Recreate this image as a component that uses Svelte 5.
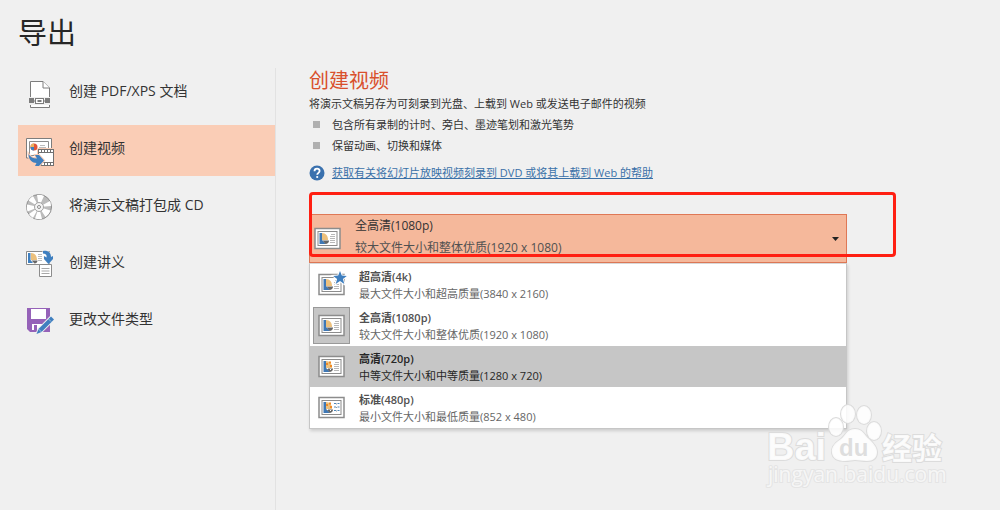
<script>
	const menu = [
		{ id: 'pdf', label: '创建 PDF/XPS 文档' },
		{ id: 'video', label: '创建视频' },
		{ id: 'cd', label: '将演示文稿打包成 CD' },
		{ id: 'handout', label: '创建讲义' },
		{ id: 'type', label: '更改文件类型' }
	];

	const qualities = [
		{ id: '4k', name: '超高清(4k)', info: '最大文件大小和超高质量(3840 x 2160)' },
		{ id: '1080', name: '全高清(1080p)', info: '较大文件大小和整体优质(1920 x 1080)' },
		{ id: '720', name: '高清(720p)', info: '中等文件大小和中等质量(1280 x 720)' },
		{ id: '480', name: '标准(480p)', info: '最小文件大小和最低质量(852 x 480)' }
	];

	let page = $state('video');
	let selected = $state('1080');
	let hovered = $state('720');
	let open = $state(true);

	let current = $derived(qualities.find((q) => q.id === selected));

	function choose(id) {
		selected = id;
		open = false;
	}
</script>

{#snippet slide(kind)}
	<svg class="slide" width="32" height="28" viewBox="0 0 32 28" aria-hidden="true">
		<rect x="1" y="3.5" width="25" height="20" fill="#fff" stroke="#8c8c8c" stroke-width="1.5" />
		<rect x="4" y="6.5" width="19" height="14" fill="#fff" stroke="#8c8c8c" />
		<path d="M5.5 8H8v7l4 4H5.5z" fill="#3f78b5" />
		<path d="M8 8c4 0 6 3 6 7H8z" fill="#ecc07d" />
		<path d="M8.5 15.5H15c0 2-1.5 3.5-3.5 3.5z" fill="#666" />
		{#if kind === '720' || kind === '480'}
			<path d="M8 10h2v2H8zM11 8.5h2v2h-2zM12 12h2v2h-2z" fill="#f08a25" />
			<path d="M9 15h1v1H9zM12 16h1v1h-1z" fill="#fff" />
		{/if}
		{#if kind === '480'}
			<path d="M16 9.5h2M19.5 9.5h2M16 13h2M19.5 13h2M16 16.5h2M19.5 16.5h2" stroke="#4d87b8" />
			<path d="M18 10h1M18 13.5h1M18 17h1" stroke="#999" />
		{:else}
			<path d="M17 9.5h4M16 11.5h5M16 13.5h5M16 15.5h5M16 17.5h5" stroke="#b8b8b8" />
		{/if}
		{#if kind === '4k'}
			<path d="M22 0l1.8 4.6 5 .3-3.900 3.100 1.400 4.900-4.300-2.800-4.300 2.800 1.400-4.900-3.900-3.100 5-.3z" fill="#3f7fbf" stroke="#fff" stroke-width="2" paint-order="stroke" />
		{/if}
	</svg>
{/snippet}

<div class="export">
	<h1>导出</h1>
	<div class="columns">
		<nav>
			{#each menu as item}
				<button class="entry" class:active={page === item.id} onclick={() => (page = item.id)}>
					<svg width="32" height="32" viewBox="0 0 32 32" aria-hidden="true">
						{#if item.id === 'pdf'}
							<path d="M6.5 20V3.5H19l6.5 6.5v19.5h-19z" fill="#fff" stroke="#7d7d7d" />
							<path d="M19 3.5V10h6.5" fill="#fff" stroke="#7d7d7d" />
							<path d="M4 19h24v8H4z" fill="#f0f0f0" />
							<path d="M7 27h18v1H7z" fill="#fff" />
							<path d="M5 20h5v5H5zM21 20h5v5h-5z" fill="#7d7d7d" />
							<rect x="11.5" y="20.5" width="8" height="5" fill="#fff" stroke="#7d7d7d" />
							<path d="M13.5 22h4v2h-4z" fill="#7d7d7d" />
							<path d="M10 23h1.5M19.5 23H21" stroke="#7d7d7d" />
						{:else if item.id === 'video'}
							<path d="M2.5 3.5h25V14h-14v9h-11z" fill="#fff" stroke="#7d7d7d" />
							<path d="M13 20.5H5.5v-14h19V14" fill="#fff" stroke="#8c8c8c" />
							<circle cx="10" cy="12" r="3.5" fill="#e0563a" />
							<path d="M10 8.5V12H6.5A3.5 3.5 0 0 1 10 8.5z" fill="#ecb35f" />
							<path d="M10 12v3.5A3.5 3.5 0 0 1 6.5 12z" fill="#3f7fbf" />
							<path d="M16 10.5h5M15 12.5h7" stroke="#bcbcbc" />
							<path d="M13 13h18v18H13z" fill="#facdb6" />
							<path d="M14 14h16v17H14z" fill="#707070" />
							<path d="M15 18h14v9H15z" fill="#fff" />
							<path d="M15 16h14M15 29h14" stroke="#fff" stroke-width="2" stroke-dasharray="2 1" />
							<path d="M4.5 19c0 6 4 9 8 9L11 31h4l5-5.500-5-5.500h-4l2 3.500C9 23.500 6.500 22 4.500 19z" fill="#3f7fbf" stroke="#facdb6" stroke-width="2" paint-order="stroke" />
						{:else if item.id === 'cd'}
							<circle cx="15" cy="15" r="12.5" fill="#bcbcbc" stroke="#8c8c8c" />
							<path d="M15 15L9 4A12 12 0 0 0 4.5 8.5zM15 15L3 12.5a12 12 0 0 0 .5 7zM15 15L13 3a12 12 0 0 1 7 1zM15 15l11-6a12 12 0 0 1 1 5zM15 15l11.5 3.5a12 12 0 0 1-5 6.5zM15 15l3 12a12 12 0 0 1-7-.5zM15 15L5 22a12 12 0 0 0 4 4z" fill="#fff" />
							<circle cx="15" cy="15" r="4.5" fill="#f4f4f4" stroke="#a4a4a4" />
							<circle cx="15" cy="15" r="1.5" fill="#fff" stroke="#8c8c8c" />
						{:else if item.id === 'handout'}
							<path d="M2.5 2.5h23v13h-23z" fill="#fff" stroke="#8c8c8c" />
							<path d="M4 4h2.5v7L9 14H4z" fill="#3f7fbf" />
							<path d="M7 4c4 0 6 3 6 7H7z" fill="#ecc07d" />
							<path d="M7.5 11.5h6c0 2-1.5 3-3 3z" fill="#666" />
							<path d="M14 5.5h4M14 7.5h4M14 9.5h4M14 11.5h4" stroke="#bcbcbc" />
							<path d="M15.5 15.5h12v12h-12z" fill="#fff" stroke="#8c8c8c" />
							<path d="M17.5 19.5h8M17.5 22h8M17.5 24.5h8" stroke="#a8a8a8" />
							<path d="M19 2c5-1 8 2 8 6l2-1v3l-4.5 5L20 10V7l2.5 1.5C23 6 22 4.5 19 4.5z" fill="#3f7fbf" stroke="#f0f0f0" paint-order="stroke" />
						{:else}
							<path d="M3 2h23v24H6l-3-3z" fill="#9562b8" />
							<path d="M7 3h15v10H7z" fill="#fff" />
							<path d="M8 18h12v6H8z" fill="#fff" />
							<path d="M10 19h3v5h-3z" fill="#9562b8" />
							<path d="M27 10.5l3 3L17.5 26l-5 2 2-5z" fill="#3f7fbf" stroke="#f0f0f0" stroke-width="2" paint-order="stroke" />
							<path d="M24.5 13l2.5 2.5M14.5 23l3 3" stroke="#fff" stroke-width="0.5" />
						{/if}
					</svg>
					<span>{item.label}</span>
				</button>
			{/each}
		</nav>

		<main>
			<h2>创建视频</h2>
			<p>将演示文稿另存为可刻录到光盘、上载到 Web 或发送电子邮件的视频</p>
			<ul>
				<li>包含所有录制的计时、旁白、墨迹笔划和激光笔势</li>
				<li>保留动画、切换和媒体</li>
			</ul>
			<div class="help">
				<svg width="16" height="16" viewBox="0 0 16 16" aria-hidden="true">
					<circle cx="8" cy="8" r="7.5" fill="#3a71ae" />
					<path d="M5.5 6.2C5.5 2.8 10.7 3 10.6 6c0 1.8-2.4 1.9-2.4 3.8" fill="none" stroke="#fff" stroke-width="1.8" />
					<circle cx="8.2" cy="12" r="1.1" fill="#fff" />
				</svg>
				<a href="#help">获取有关将幻灯片放映视频刻录到 DVD 或将其上载到 Web 的帮助</a>
			</div>

			<div class="picker">
				<button class="trigger" aria-haspopup="listbox" aria-expanded={open} onclick={() => (open = !open)}>
					{@render slide('trigger')}
					<span class="text">
						<span class="name">{current.name}</span>
						<span class="info">{current.info}</span>
					</span>
					<svg class="caret" width="7" height="4" viewBox="0 0 7 4" aria-hidden="true">
						<path d="M0 0h7L3.5 4z" fill="#222" />
					</svg>
				</button>
				{#if open}
					<div class="list" role="listbox" aria-label="视频质量">
						{#each qualities as q}
							<button
								class="option"
								class:hovered={hovered === q.id}
								role="option"
								aria-selected={selected === q.id}
								onmouseenter={() => (hovered = q.id)}
								onclick={() => choose(q.id)}
							>
								<span class="thumb" class:selected={selected === q.id}>{@render slide(q.id)}</span>
								<span class="text">
									<span class="name">{q.name}</span>
									<span class="info">{q.info}</span>
								</span>
							</button>
						{/each}
					</div>
				{/if}
				<div class="mark"></div>
			</div>
		</main>
	</div>

	<svg class="watermark" width="190" height="92" viewBox="0 0 190 92">
		<g fill="#fff" fill-opacity="0.85" stroke="#dcdcdc" stroke-width="2" paint-order="stroke">
			<text class="latin" x="2" y="60" font-size="38" font-weight="700">Bai</text>
			<ellipse cx="71" cy="27" rx="7" ry="9" />
			<ellipse cx="83" cy="14" rx="7" ry="9" />
			<ellipse cx="99" cy="15" rx="7" ry="9" />
			<ellipse cx="109" cy="31" rx="7" ry="9" />
			<path d="M90 29c-8 0-9 6-14 10-6 4-10 8-9 14 1 6 6 8 13 8 4 0 7-1 10-1s8 1 12 1c6 0 10-3 10-9 0-5-4-9-8-13-5-4-6-10-14-10z" />
			<text class="latin du" x="74" y="56" font-size="24" font-weight="700">du</text>
			<text x="117" y="59" font-size="30" font-weight="700">经验</text>
			<text class="url" x="3" y="82" font-size="21">jingyan.baidu.com</text>
		</g>
	</svg>
</div>

<style>
	:global(body) {
		background: #f0f0f0;
	}
	.export {
		position: relative;
		box-sizing: border-box;
		min-height: 100vh;
		display: flex;
		flex-direction: column;
		padding-left: 18px;
		font-family: 'Open Sans', 'Noto Sans CJK SC', sans-serif;
		color: #333;
	}
	h1,
	h2,
	p,
	ul {
		margin: 0;
		padding: 0;
		font-weight: 400;
	}
	h1 {
		padding: 13px 0 15px;
		font-size: 29px;
		line-height: 40px;
		color: #262626;
	}
	button {
		display: flex;
		align-items: center;
		border: 0;
		padding: 0;
		background: none;
		font-family: inherit;
		color: inherit;
		text-align: left;
	}
	svg {
		flex: none;
		display: block;
	}
	.columns {
		flex: 1;
		display: flex;
	}
	nav {
		flex: none;
		width: 257px;
		display: flex;
		flex-direction: column;
		gap: 6px;
		border-right: 1px solid #e2e2e2;
	}
	.entry {
		height: 51px;
		gap: 13px;
		padding: 0 6px;
		font-size: 14px;
		line-height: 20px;
	}
	.entry span {
		padding-bottom: 6px;
	}
	.entry.active {
		background: #facdb6;
	}
	main {
		flex: 1;
		padding: 0 32px 0 33px;
		font-size: 11px;
		line-height: 20px;
	}
	h2 {
		font-size: 20px;
		line-height: 26px;
		color: #d9502d;
	}
	li {
		display: flex;
		align-items: center;
		gap: 12px;
		padding-left: 4px;
		line-height: 21px;
	}
	li::before {
		content: '';
		width: 7px;
		height: 7px;
		background: #b0b0b0;
	}
	.help {
		display: flex;
		align-items: center;
		gap: 7px;
		padding-top: 7px;
		line-height: 20px;
	}
	a {
		color: #3a71a8;
	}
	.picker {
		position: relative;
		max-width: 538px;
		margin-top: 31px;
	}
	.trigger {
		box-sizing: border-box;
		width: 100%;
		height: 49px;
		padding: 0 7px 0 4px;
		gap: 9px;
		border: 1px solid #df7856;
		background: #f5b89b;
	}
	.text {
		flex: 1;
		display: flex;
		flex-direction: column;
	}
	.trigger .text {
		padding-bottom: 4px;
		font-size: 12px;
		line-height: 22px;
	}
	.trigger .info {
		color: #505050;
	}
	.list {
		border: 1px solid #c6c6c6;
		border-top-color: #d8d8d8;
		background: #fff;
		box-shadow: 1px 2px 3px #00000026;
	}
	.option {
		width: 100%;
		height: 41px;
		gap: 9px;
		padding-left: 3px;
		font-size: 11px;
		line-height: 17px;
		color: #666;
	}
	.option .name {
		font-weight: 600;
		color: #505050;
	}
	.option.hovered,
	.option.hovered .name {
		background: #c6c6c6;
		color: #262626;
	}
	.thumb {
		box-sizing: border-box;
		width: 37px;
		height: 37px;
		display: flex;
		align-items: center;
		padding-left: 4px;
		border: 1px solid transparent;
	}
	.thumb.selected {
		border-color: #999;
		background: #c6c6c6;
	}
	.mark {
		position: absolute;
		top: -22px;
		left: 0;
		right: -49px;
		height: 59px;
		border: 3px solid #ff1f12;
		border-radius: 4px;
		pointer-events: none;
	}
	.watermark {
		position: absolute;
		right: 45px;
		bottom: 18px;
		pointer-events: none;
	}
	.watermark .latin {
		font-family: 'Liberation Sans', sans-serif;
	}
	.watermark .du {
		fill: #d9d9d9;
		stroke: none;
	}
	.watermark .url {
		stroke: #e4e4e4;
		fill: #fafafa;
	}
</style>
